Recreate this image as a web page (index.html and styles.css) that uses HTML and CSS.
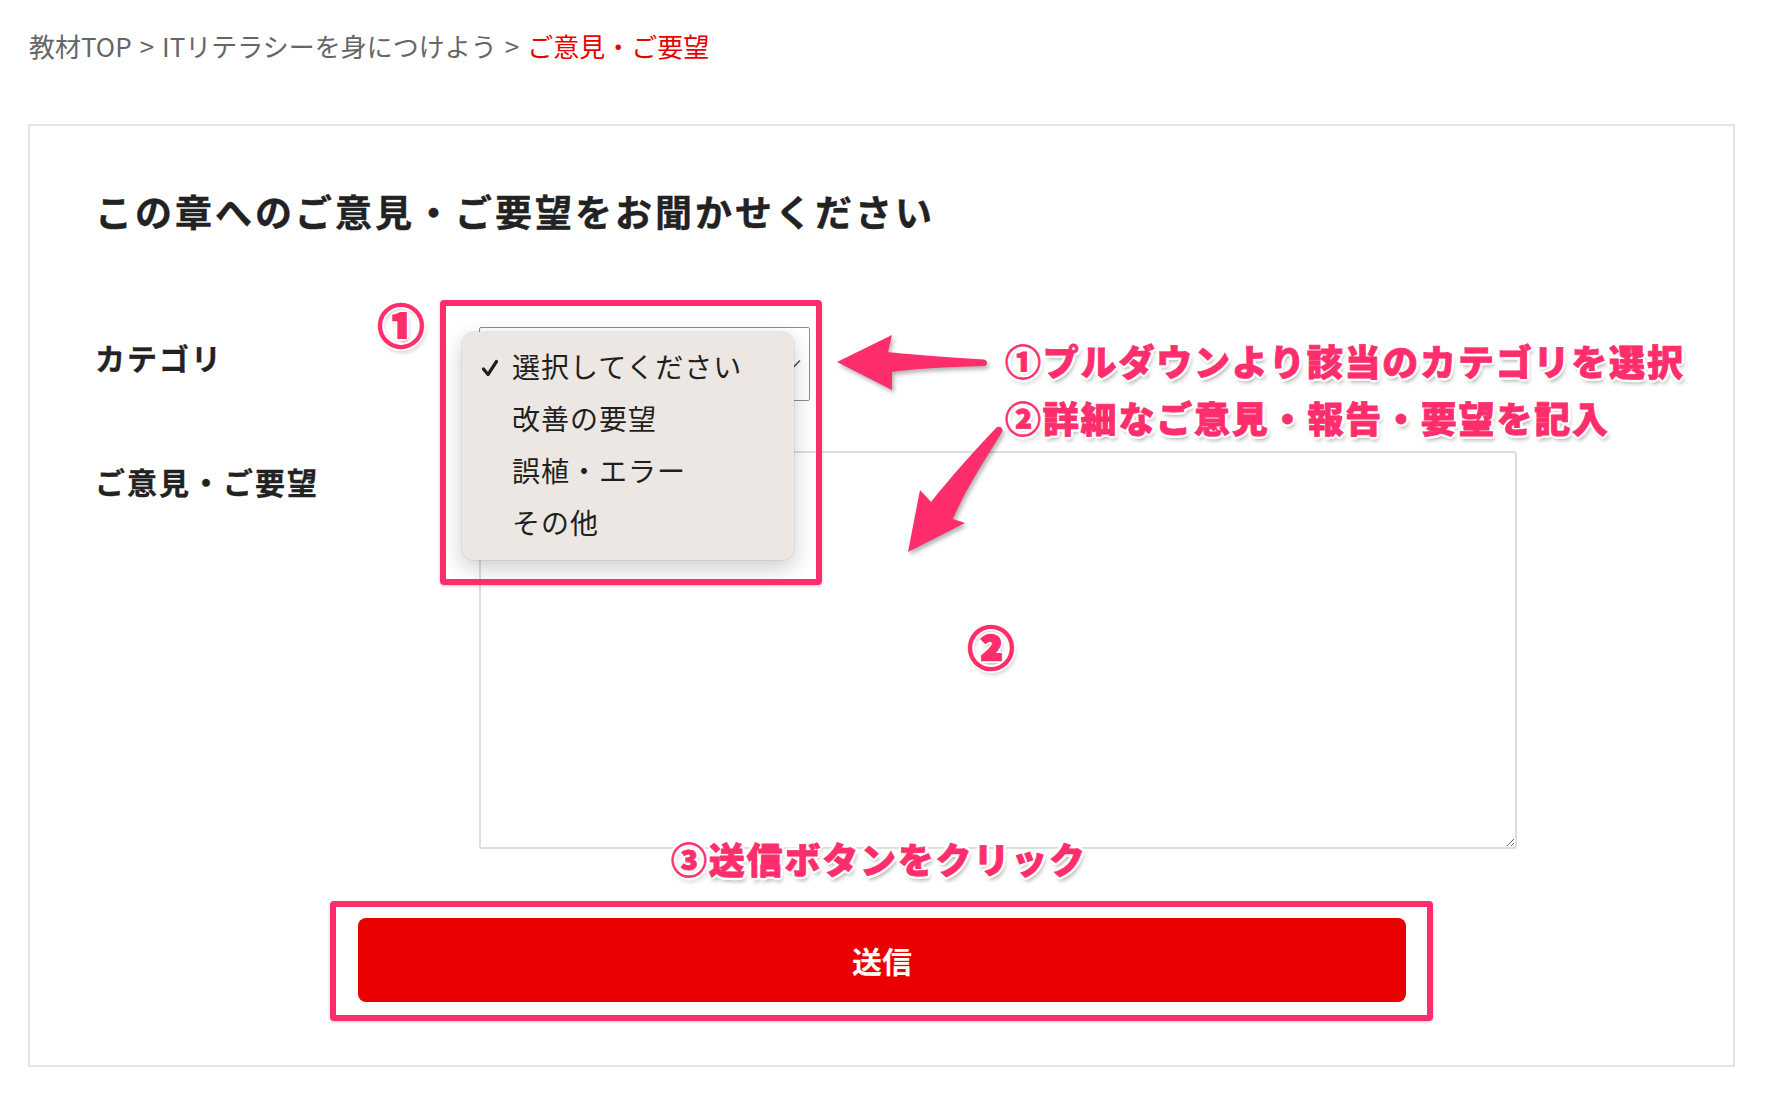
FILE: index.html
```html
<!DOCTYPE html>
<html lang="ja">
<head>
    <meta charset="UTF-8">
    <meta name="viewport" content="width=device-width, initial-scale=1.0">
    <title>ご意見・ご要望</title>
    <link rel="stylesheet" href="styles.css">
</head>
<body>
<nav class="breadcrumb">
    <a href="#">教材TOP</a><span class="sep">&gt;</span><a href="#">ITリテラシーを身につけよう</a><span class="sep">&gt;</span><span class="current">ご意見・ご要望</span>
</nav>

<section class="feedback">
    <h2 class="feedback-title">この章へのご意見・ご要望をお聞かせください</h2>

    <form class="feedback-form">
        <div class="form-row">
            <label class="form-label" for="category">カテゴリ</label>
            <div class="select-wrap">
                <select id="category">
                    <option>選択してください</option>
                    <option>改善の要望</option>
                    <option>誤植・エラー</option>
                    <option>その他</option>
                </select>
                <svg class="select-arrow" width="14" height="9" viewBox="0 0 14 9">
                    <path d="M1 1.5 L7 7.5 L13 1.5" fill="none" stroke="#555" stroke-width="1.6"/>
                </svg>

                <!-- open popup of the select -->
                <ul class="dropdown">
                    <li class="dropdown-item">
                        <svg class="check" width="16" height="20" viewBox="0 0 16 20">
                            <path d="M1.5 13 L6 18.5 L14.5 5.5" fill="none" stroke="#1f1f1f" stroke-width="3.2" stroke-linecap="round" stroke-linejoin="round"/>
                        </svg>
                        <span>選択してください</span>
                    </li>
                    <li class="dropdown-item"><span class="check"></span><span>改善の要望</span></li>
                    <li class="dropdown-item"><span class="check"></span><span>誤植・エラー</span></li>
                    <li class="dropdown-item"><span class="check"></span><span>その他</span></li>
                </ul>

                <div class="mark mark-select"></div>
            </div>
        </div>

        <div class="form-row">
            <label class="form-label" for="message">ご意見・ご要望</label>
            <textarea id="message"></textarea>
        </div>

        <div class="submit-area">
            <button type="submit" class="submit-btn">送信</button>
        </div>
    </form>
</section>

<!-- annotations -->
<span class="num num-1">①</span>
<span class="num num-2">②</span>
<p class="note note-1">①プルダウンより該当のカテゴリを選択</p>
<p class="note note-2">②詳細なご意見・報告・要望を記入</p>
<p class="note note-3">③送信ボタンをクリック</p>

<svg class="arrows" width="1768" height="1102" viewBox="0 0 1768 1102">
    <path d="M837 362 L892 335 L888 352 C905 354 940 357 984 359.5 C988 360 988 366 984 366 C945 367 910 369 892 372 L892 390 Z"/>
    <path d="M908 552 L920 490 L931 502 C950 478 975 450 996 428 C999 425 1004 428 1002 432 C985 460 965 490 953 519 L965 523 Z"/>
</svg>
</body>
</html>
```

FILE: styles.css
```css
* {
    margin: 0;
    padding: 0;
    box-sizing: border-box;
}

body {
    font-family: "Noto Sans CJK JP", "Noto Sans", sans-serif;
    color: #222;
    background: #fff;
    position: relative;
    width: 1768px;
    min-height: 1102px;
}

/* breadcrumb */
.breadcrumb {
    padding: 26px 29px 0;
    font-size: 26px;
    line-height: 39px;
    color: #666;
}

.breadcrumb a {
    color: #666;
    text-decoration: none;
}

.breadcrumb .sep {
    margin: 0 8px;
}

.breadcrumb .current {
    color: #e60000;
}

/* feedback box */
.feedback {
    width: 1707px;
    margin: 59px 0 0 28px;
    border: 2px solid #e4e4e4;
    padding: 58px 65px 44px;
}

.feedback-title {
    font-size: 37px;
    line-height: 54px;
    font-weight: 700;
    letter-spacing: 3px;
    margin-bottom: 89px;
    -webkit-text-stroke: 0.4px #222;
}

.form-row {
    display: flex;
    align-items: flex-start;
}

.form-row + .form-row {
    margin-top: 50px;
}

.form-label {
    width: 384px;
    flex-shrink: 0;
    padding-top: 8px;
    font-size: 30px;
    line-height: 45px;
    font-weight: 700;
    letter-spacing: 2px;
    -webkit-text-stroke: 0.3px #222;
}

.select-wrap {
    position: relative;
    width: 331px;
    height: 74px;
}

.select-wrap select {
    appearance: none;
    -webkit-appearance: none;
    width: 100%;
    height: 100%;
    border: 1.5px solid #8d8d8d;
    border-radius: 2px;
    background: #fff;
    font-family: inherit;
    font-size: 26px;
    color: #222;
    padding: 0 40px 0 20px;
}

.select-arrow {
    position: absolute;
    right: 9px;
    top: 32px;
}

.form-row textarea {
    width: 1038px;
    height: 398px;
    border: 2px solid #dedede;
    border-radius: 3px;
    font-family: inherit;
    font-size: 24px;
    padding: 12px;
}

.submit-area {
    width: 1103px;
    margin: 52px auto 0;
    border: 6px solid #fe2e6c;
    border-radius: 4px;
    padding: 11px 21px 13px 22px;
    box-shadow: 0 1px 3px rgba(0, 0, 0, 0.2);
}

.submit-btn {
    display: block;
    width: 1048px;
    height: 84px;
    border: none;
    border-radius: 8px;
    background: #eb0000;
    color: #fff;
    font-family: inherit;
    font-size: 30px;
    font-weight: 700;
    cursor: pointer;
}

/* open select popup */
.dropdown {
    position: absolute;
    left: -17px;
    top: 5px;
    width: 332px;
    height: 228px;
    list-style: none;
    padding: 8px 0 12px;
    background: #ece7e3;
    border-radius: 12px;
    box-shadow: 0 8px 22px rgba(0, 0, 0, 0.2), 0 0 0 1px rgba(0, 0, 0, 0.06);
}

.dropdown-item {
    display: flex;
    align-items: center;
    height: 52px;
    padding-left: 20px;
    font-size: 28px;
    letter-spacing: 1px;
    color: #1f1f1f;
}

.dropdown-item .check {
    width: 16px;
    margin-right: 14px;
    flex-shrink: 0;
}

/* annotation marks */
.mark {
    position: absolute;
    border: 6px solid #fe2e6c;
    border-radius: 4px;
    box-shadow: 0 1px 3px rgba(0, 0, 0, 0.2);
}

.mark-select {
    left: -39px;
    top: -27px;
    width: 382px;
    height: 285px;
}

.num,
.note {
    position: absolute;
    color: #fe2e6c;
    font-weight: 900;
    line-height: 1;
    white-space: nowrap;
    text-shadow:
        3px 0 0 #fff, -3px 0 0 #fff, 0 3px 0 #fff, 0 -3px 0 #fff,
        2px 2px 0 #fff, -2px 2px 0 #fff, 2px -2px 0 #fff, -2px -2px 0 #fff,
        2px 4px 4px rgba(0, 0, 0, 0.35);
}

.num {
    font-size: 46px;
    -webkit-text-stroke: 2.4px #fe2e6c;
}

.num-1 {
    left: 378px;
    top: 300px;
}

.num-2 {
    left: 968px;
    top: 622px;
}

.note {
    font-size: 36px;
    letter-spacing: 1.8px;
    -webkit-text-stroke: 0.8px #fe2e6c;
}

.note-1 {
    left: 1005px;
    top: 342px;
}

.note-2 {
    left: 1005px;
    top: 399px;
}

.note-3 {
    left: 671px;
    top: 840px;
}

.arrows {
    position: absolute;
    left: 0;
    top: 0;
    pointer-events: none;
    fill: #fe2e6c;
    filter: drop-shadow(2px 3px 2px rgba(0, 0, 0, 0.3));
}
```
